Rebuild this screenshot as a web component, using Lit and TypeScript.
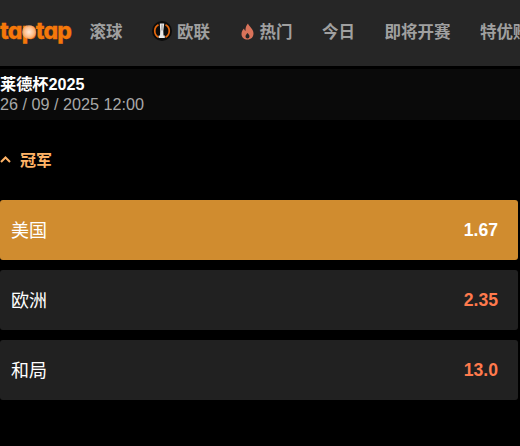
import { LitElement, html, css } from "lit";
import { customElement } from "lit/decorators.js";

const CJK = `"Liberation Sans", "Noto Sans CJK SC", sans-serif`;

@customElement("app-root")
export class AppRoot extends LitElement {
  static styles = css`
    :host { display: block; width: 520px; height: 446px; background: #000; overflow: hidden; font-family: ${css([CJK] as any)}; color: #fff; }
    header { display: flex; align-items: center; height: 66px; padding-bottom: 4px; box-sizing: border-box; background: #262626; white-space: nowrap; overflow: hidden; }
    .logo { position: relative; width: 71px; flex: none; font-family: "Inter", sans-serif; font-feature-settings: "cv11" 1; font-weight: 800; font-size: 23px; letter-spacing: -0.75px; line-height: 30px; color: #f5780a; -webkit-text-stroke: 0.3px #f5780a; margin-right: 18.5px; }
    .glow { position: absolute; left: 22px; top: 9px; width: 14px; height: 14px; border-radius: 50%; background: radial-gradient(circle, #ffe9d8 0%, #ffc08f 45%, rgba(245,120,10,0) 100%); }
    nav { display: flex; align-items: center; gap: 29.5px; font-size: 16.5px; font-weight: 700; color: #a0a0a0; }
    .item { display: flex; align-items: center; gap: 5px; flex: none; }
    .item svg { display: block; flex: none; }
    .info { margin-top: 3px; height: 51px; background: #0a0a0a; padding-top: 6px; box-sizing: border-box; }
    .title { font-size: 16.2px; font-weight: 700; line-height: 18px; }
    .date { font-size: 16.2px; line-height: 22px; color: #a8a8a8; }
    .section { display: flex; align-items: center; gap: 9px; height: 20px; margin: 29px 0 31px; color: #ffb366; font-size: 16px; font-weight: 700; }
    .list { display: flex; flex-direction: column; gap: 10px; width: 518px; }
    .row { display: flex; align-items: center; justify-content: space-between; height: 60px; padding: 0 20px 0 11px; box-sizing: border-box; background: #212121; border-radius: 3px; font-size: 17.6px; }
    .name { font-size: 18px; margin-top: -2px; }
    .row.on { background: #d08c2f; }
    .odds { font-weight: 700; color: #ff7a4d; }
    .on .odds { color: #fff; }
  `;

  render() {
    const rows = [
      { n: "美国", o: "1.67", on: true },
      { n: "欧洲", o: "2.35", on: false },
      { n: "和局", o: "13.0", on: false },
    ];
    return html`
      <header>
        <div class="logo">taptap<span class="glow"></span></div>
        <nav>
          <div class="item">滚球</div>
          <div class="item">
            <svg width="20" height="20" viewBox="0 0 20 20">
              <circle cx="10" cy="10" r="10" fill="#0c0c0c"/>
              <path d="M6.500 3.800A7 7 0 0 0 6.500 16.200M13.500 3.800A7 7 0 0 1 13.500 16.200" fill="none" stroke="#e8680c" stroke-width="1.700"/>
              <path d="M7.800 2.500h4.400l-.9 7.500.2 4.500h1.300v2.500H6.700v-2.500H8l.2-4.500z" fill="#e8e8e8"/>
              <path d="M9.700 3.500h.6v6h-.6z" fill="#555"/>
            </svg>
            欧联
          </div>
          <div class="item">
            <svg width="15" height="17" viewBox="0 0 14 17">
              <path fill-rule="evenodd" d="M7.500.5c.6 2.800 5.500 5 5.500 10C13 14.300 10.500 16.500 7 16.500s-6-2.200-6-5.600c0-2.500 1.300-4.100 2.500-5.400.2 1.200.7 2 1.500 2.500C4.800 5 5.700 2.300 7.500.5zM7 10c-1 1.200-2 2.100-2 3.500 0 1.200.9 2 2 2s2-.8 2-2c0-1.400-1-2.300-2-3.500z" fill="#d9735a"/>
            </svg>
            热门
          </div>
          <div class="item">今日</div>
          <div class="item">即将开赛</div>
          <div class="item">特优赔率</div>
        </nav>
      </header>
      <div class="info">
        <div class="title">莱德杯2025</div>
        <div class="date">26 / 09 / 2025 12:00</div>
      </div>
      <div class="section">
        <svg width="11" height="7" viewBox="0 0 11 7"><path d="M1 6l4.500-4.500L10 6" fill="none" stroke="#ffb366" stroke-width="2"/></svg>
        <span>冠军</span>
      </div>
      <div class="list">
        ${rows.map(r => html`<div class="row ${r.on ? "on" : ""}"><span class="name">${r.n}</span><span class="odds">${r.o}</span></div>`)}
      </div>
    `;
  }
}
